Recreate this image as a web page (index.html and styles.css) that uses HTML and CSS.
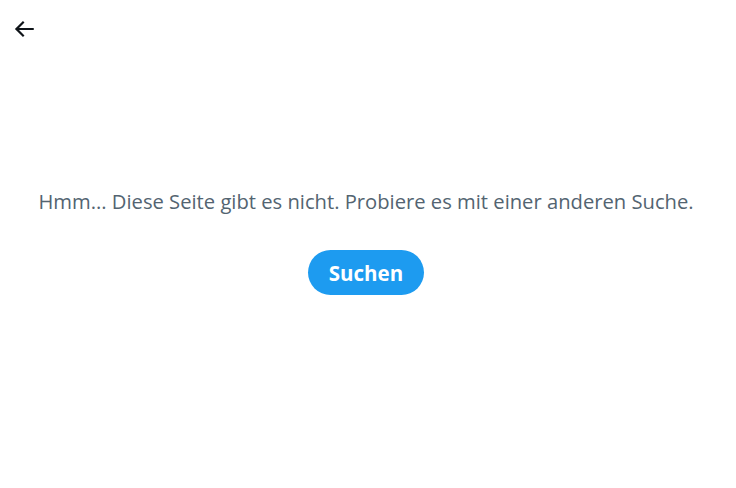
FILE: index.html
```html
<!DOCTYPE html>
<html lang="de">
<head>
<meta charset="utf-8">
<link rel="stylesheet" href="styles.css">
</head>
<body>
<div class="page">
  <header class="topbar">
    <button class="back" aria-label="Zurück">
      <svg viewBox="0 0 24 24" width="26" height="26"><path d="M7.414 13l5.043 5.04-1.414 1.42L3.586 12l7.457-7.46 1.414 1.42L7.414 11H21v2H7.414z"/></svg>
    </button>
  </header>
  <main class="empty">
    <p class="msg">Hmm... Diese Seite gibt es nicht. Probiere es mit einer anderen Suche.</p>
    <button class="search">Suchen</button>
  </main>
</div>
</body>
</html>
```
FILE: styles.css
```css
html, body {
  margin: 0;
  padding: 0;
  background: #fff;
}
body {
  font-family: "Open Sans", "Noto Sans", sans-serif;
  color: #0f1419;
}
.page {
  width: 736px;
  height: 488px;
  display: flex;
  flex-direction: column;
}
.topbar {
  height: 60px;
  padding: 0 11px;
  display: flex;
  align-items: flex-start;
}
.back {
  margin-top: 16px;
  width: 26px;
  height: 26px;
  border: 0;
  background: transparent;
  padding: 0;
  display: flex;
  align-items: center;
  justify-content: center;
}
.back svg {
  fill: #0f1419;
}
.empty {
  display: flex;
  flex-direction: column;
  align-items: center;
  padding-top: 127px;
  padding-right: 4px;
}
.msg {
  margin: 0;
  font-size: 20.2px;
  line-height: 28px;
  color: #536471;
}
.search {
  margin-top: 35px;
  height: 45px;
  padding: 0 21px;
  border: 0;
  border-radius: 9999px;
  background: #1d9bf0;
  color: #fff;
  font-family: "Open Sans", "Noto Sans", sans-serif;
  font-weight: 700;
  font-size: 20.5px;
}
```
